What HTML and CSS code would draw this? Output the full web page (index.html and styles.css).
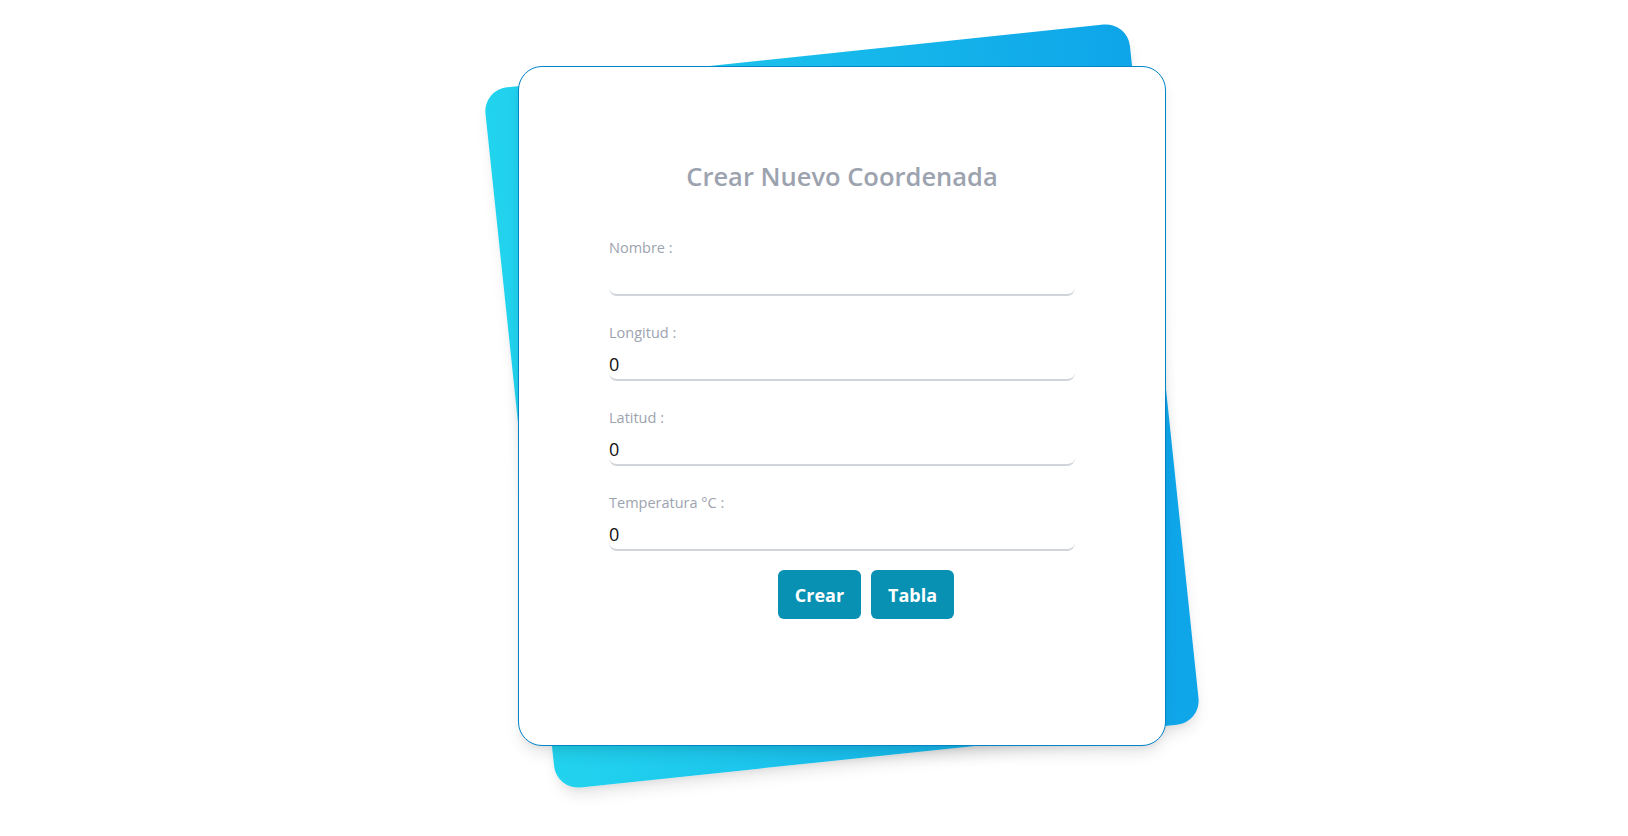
FILE: index.html
```html
<!DOCTYPE html>
<html lang="es">
<head>
<meta charset="utf-8">
<title>Crear Nuevo Coordenada</title>
<link rel="stylesheet" href="styles.css">
</head>
<body>
<div class="page">
  <div class="stack">
    <div class="card">
      <h1 class="title">Crear Nuevo Coordenada</h1>
      <form class="form">
        <div class="field">
          <label class="label">Nombre :</label>
          <input class="input" type="text" value="">
        </div>
        <div class="field">
          <label class="label">Longitud :</label>
          <input class="input" type="text" value="0">
        </div>
        <div class="field">
          <label class="label">Latitud :</label>
          <input class="input" type="text" value="0">
        </div>
        <div class="field">
          <label class="label">Temperatura °C :</label>
          <input class="input" type="text" value="0">
        </div>
        <div class="actions">
          <button type="button" class="btn">Crear</button>
          <button type="button" class="btn">Tabla</button>
        </div>
      </form>
    </div>
  </div>
</div>
</body>
</html>
```
FILE: styles.css
```css
* { box-sizing: border-box; }
html, body { margin: 0; padding: 0; background: #ffffff; }
body { font-family: "Open Sans", "Noto Sans", sans-serif; }

.page {
  padding: 54px 0 0 518px;
  height: 836px;
  overflow: hidden;
}

.stack {
  position: relative;
  width: 648px;
  padding: 12px 0;
}

.stack::before {
  content: "";
  position: absolute;
  inset: 0;
  background: linear-gradient(to right, #22d3ee, #0ea5e9);
  border-radius: 24px;
  transform: rotate(-6deg);
  box-shadow: 0 10px 15px -3px rgba(0,0,0,0.1), 0 4px 6px -2px rgba(0,0,0,0.05);
}

.card {
  position: relative;
  height: 680px;
  background: #ffffff;
  border: 1px solid #0284c7;
  border-radius: 24px;
  box-shadow: 0 10px 15px -3px rgba(0,0,0,0.1), 0 4px 6px -2px rgba(0,0,0,0.05);
  padding: 91px 90px 0 90px;
}

.title {
  margin: 0;
  text-align: center;
  font-size: 25.5px;
  line-height: 36px;
  font-weight: 600;
  color: #9ca3af;
}

.form {
  margin-top: 43.5px;
  display: flex;
  flex-direction: column;
}

.field {
  display: flex;
  flex-direction: column;
  margin-bottom: 26.5px;
}

.label {
  font-size: 14.5px;
  line-height: 20px;
  color: #9ca3af;
  margin-bottom: 5.5px;
}

.input {
  height: 33px;
  border: none;
  border-bottom: 2px solid #d1d5db;
  border-radius: 8px;
  padding: 0;
  font-family: "Open Sans", "Noto Sans", sans-serif;
  font-size: 18px;
  color: #111111;
  background: #ffffff;
  outline: none;
}

.actions {
  margin-top: -7.5px;
  display: flex;
  justify-content: center;
  gap: 10px;
  padding-left: 48px;
}

.btn {
  width: 83px;
  height: 49px;
  border: none;
  border-radius: 6px;
  background: #0891b2;
  color: #ffffff;
  font-family: "Open Sans", "Noto Sans", sans-serif;
  font-size: 18px;
  font-weight: 700;
  padding-top: 2px;
  cursor: pointer;
}
```
